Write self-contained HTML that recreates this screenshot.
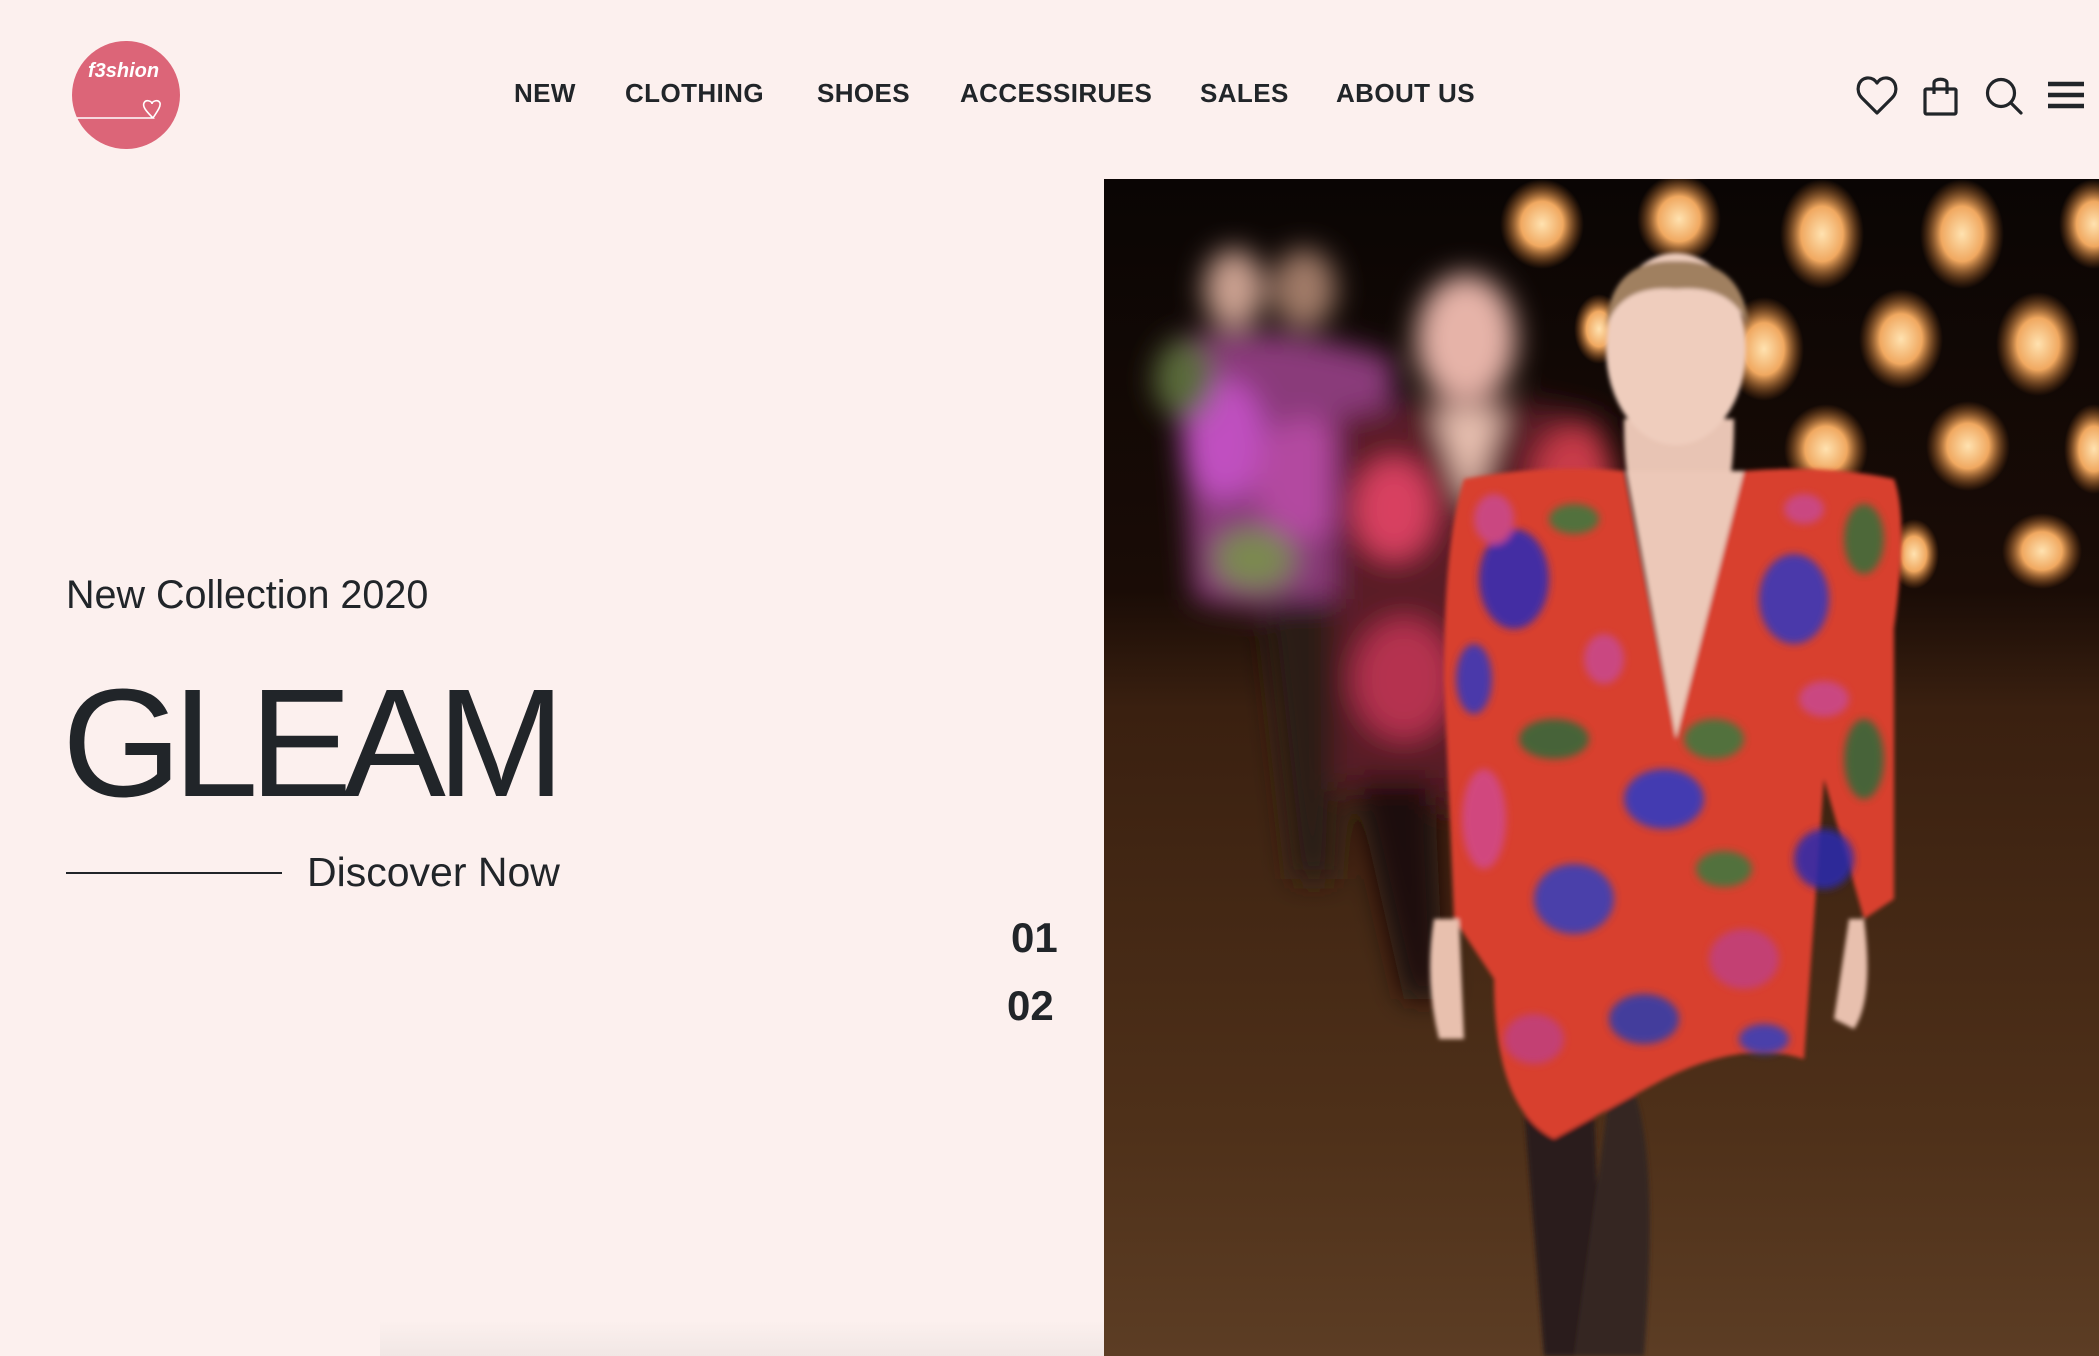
<!DOCTYPE html>
<html><head><meta charset="utf-8"><style>
*{margin:0;padding:0;box-sizing:border-box}
html,body{width:2099px;height:1356px;overflow:hidden;background:#fcf0ee;font-family:"Liberation Sans",sans-serif;color:#212529}
.abs{position:absolute}
nav a{position:absolute;top:78px;font-size:26px;font-weight:bold;color:#212529;text-decoration:none;letter-spacing:0.4px;white-space:nowrap}
</style></head><body>
<svg class="abs" style="left:72px;top:41px" width="108" height="108" viewBox="0 0 108 108">
<circle cx="54" cy="54" r="54" fill="#dc6578"/>
<text x="16" y="36" font-family="Liberation Sans" font-style="italic" font-weight="bold" font-size="20" fill="#fff">f3shion</text>
<path d="M5 77 H81 C76 72 70 66 72 62 C74 58 80 60 80 63 C80 60 86 58 88 62 C89 66 84 72 81 77" fill="none" stroke="#fff" stroke-width="1.6"/>
</svg>
<nav>
<a style="left:514px">NEW</a>
<a style="left:625px">CLOTHING</a>
<a style="left:817px">SHOES</a>
<a style="left:960px">ACCESSIRUES</a>
<a style="left:1200px">SALES</a>
<a style="left:1336px">ABOUT US</a>
</nav>
<svg class="abs" style="left:1855px;top:74px" width="240" height="44" viewBox="0 0 240 44" fill="none" stroke="#212529" stroke-width="3.2">
<path d="M22 39 L7 24 C0 17 3 5 12 4 C17 3.5 20 6 22 9 C24 6 27 3.5 32 4 C41 5 44 17 37 24 Z" stroke-linejoin="round"/>
<rect x="70" y="15" width="31" height="25" rx="1.5"/>
<path d="M79 20 V9 C79 4 92 4 92 9 V20"/>
<circle cx="146" cy="19" r="13.5"/>
<path d="M156 29 L166 39" stroke-linecap="round"/>
<path d="M193 10 H229 M193 21 H229 M193 32 H229" stroke-width="4.5"/>
</svg>
<div class="abs" style="left:66px;top:573px;font-size:39.5px;white-space:nowrap">New Collection 2020</div>
<div class="abs" style="left:62px;top:666px;font-size:154px;letter-spacing:-9px;line-height:1;white-space:nowrap">GLEAM</div>
<div class="abs" style="left:66px;top:872px;width:216px;height:2px;background:#212529"></div>
<div class="abs" style="left:307px;top:849px;font-size:41px;white-space:nowrap">Discover Now</div>
<div class="abs" style="left:1011px;top:914px;font-size:42px;font-weight:bold">01</div>
<div class="abs" style="left:1007px;top:982px;font-size:42px;font-weight:bold">02</div>
<div class="abs" style="left:380px;top:1320px;width:724px;height:36px;background:linear-gradient(#fcf0ee,#f1e7e5)"></div>
<svg class="abs" style="left:1104px;top:179px" width="995" height="1177" viewBox="0 0 995 1177">
<defs>
<linearGradient id="bg" x1="0" y1="0" x2="0" y2="1"><stop offset="0" stop-color="#0a0504"/><stop offset="0.35" stop-color="#1a0c06"/><stop offset="0.45" stop-color="#3a2010"/><stop offset="0.8" stop-color="#4e3019"/><stop offset="1" stop-color="#5c3d24"/></linearGradient>
<filter id="b1"><feGaussianBlur stdDeviation="14"/></filter>
<filter id="b2"><feGaussianBlur stdDeviation="4"/></filter>
<filter id="b3"><feGaussianBlur stdDeviation="2"/></filter>
<radialGradient id="bk"><stop offset="0" stop-color="#ffe2b0"/><stop offset="0.5" stop-color="#f0a860"/><stop offset="1" stop-color="#b06020" stop-opacity="0"/></radialGradient>
</defs>
<rect width="995" height="1177" fill="url(#bg)"/>
<g>
<ellipse cx="438" cy="45" rx="42" ry="45" fill="url(#bk)"/>
<ellipse cx="575" cy="40" rx="42" ry="45" fill="url(#bk)"/>
<ellipse cx="718" cy="55" rx="42" ry="55" fill="url(#bk)"/>
<ellipse cx="858" cy="55" rx="42" ry="55" fill="url(#bk)"/>
<ellipse cx="990" cy="45" rx="35" ry="45" fill="url(#bk)"/>
<ellipse cx="660" cy="170" rx="40" ry="52" fill="url(#bk)"/>
<ellipse cx="797" cy="160" rx="42" ry="50" fill="url(#bk)"/>
<ellipse cx="934" cy="165" rx="42" ry="52" fill="url(#bk)"/>
<ellipse cx="495" cy="150" rx="25" ry="35" fill="url(#bk)"/>
<ellipse cx="722" cy="270" rx="42" ry="45" fill="url(#bk)"/>
<ellipse cx="864" cy="267" rx="42" ry="45" fill="url(#bk)"/>
<ellipse cx="990" cy="270" rx="30" ry="45" fill="url(#bk)"/>
<ellipse cx="938" cy="372" rx="40" ry="38" fill="url(#bk)"/>
<ellipse cx="810" cy="375" rx="25" ry="35" fill="url(#bk)"/>
</g>
<g filter="url(#b1)">
<ellipse cx="130" cy="110" rx="30" ry="40" fill="#caa090"/>
<ellipse cx="200" cy="110" rx="32" ry="40" fill="#a07a68"/>
<path d="M70 160 Q170 140 290 180 L280 420 Q170 440 90 420 Z" fill="#8a3a7a"/>
<ellipse cx="120" cy="260" rx="40" ry="60" fill="#c050c0"/>
<ellipse cx="200" cy="300" rx="50" ry="60" fill="#b34aa0"/>
<ellipse cx="80" cy="200" rx="30" ry="40" fill="#5a6a3a"/>
<ellipse cx="150" cy="380" rx="40" ry="30" fill="#7a8a50"/>
<path d="M160 420 L190 700 L230 700 L240 420 Z" fill="#2a1a14"/>
<ellipse cx="362" cy="160" rx="50" ry="65" fill="#e6b3a8"/>
<path d="M230 240 Q370 200 500 240 L520 620 Q380 640 230 610 Z" fill="#5a1a28"/>
<ellipse cx="290" cy="330" rx="40" ry="50" fill="#d84060"/>
<ellipse cx="300" cy="500" rx="50" ry="60" fill="#b53050"/>
<ellipse cx="470" cy="300" rx="40" ry="50" fill="#c93a4a"/>
<ellipse cx="400" cy="420" rx="30" ry="30" fill="#e05070"/>
<path d="M330 230 L365 330 L400 230 Z" fill="#e8c0b0"/>
<path d="M250 600 L300 820 L340 820 L330 600 Z" fill="#1a0f0c"/>
</g>
<g filter="url(#b3)">
<path d="M520 240 Q520 300 530 320 L620 320 Q630 300 630 240 Z" fill="#e8c4b4"/>
<ellipse cx="572" cy="170" rx="70" ry="96" fill="#efcdbd"/>
<path d="M502 150 Q505 80 572 82 Q640 80 645 150 Q630 105 572 110 Q515 105 502 150Z" fill="#a08060"/>
<path d="M420 930 L440 1177 L500 1177 L490 930 Z" fill="#2a1e1c"/>
<path d="M510 880 Q560 920 540 1177 L470 1177 Z" fill="#352624"/>
<path d="M360 300 Q440 285 520 292 L572 560 L640 292 Q720 285 790 300 Q805 340 790 450 L790 720 L760 740 L720 600 L700 880 Q640 860 560 900 L450 960 Q390 930 390 800 L350 740 L340 500 Q340 360 360 300 Z" fill="#d8402e"/>
<path d="M522 292 L572 560 L640 292 Z" fill="#ecc8b8"/>
<path d="M330 740 Q320 800 335 860 L360 860 L355 740 Z" fill="#e8c0ae"/>
<path d="M760 740 Q770 820 750 850 L730 840 L745 740Z" fill="#e8c0ae"/>
</g>
<g filter="url(#b2)" opacity="0.85">
<ellipse cx="410" cy="400" rx="35" ry="50" fill="#2b2bb8"/>
<ellipse cx="560" cy="620" rx="40" ry="30" fill="#2a3ac8"/>
<ellipse cx="690" cy="420" rx="35" ry="45" fill="#3038c0"/>
<ellipse cx="720" cy="680" rx="30" ry="30" fill="#2a2ab0"/>
<ellipse cx="470" cy="720" rx="40" ry="35" fill="#3040c0"/>
<ellipse cx="380" cy="640" rx="22" ry="50" fill="#d04a8c"/>
<ellipse cx="640" cy="780" rx="35" ry="30" fill="#c04080"/>
<ellipse cx="450" cy="560" rx="35" ry="20" fill="#2f6a3a"/>
<ellipse cx="760" cy="360" rx="20" ry="35" fill="#35703a"/>
<ellipse cx="540" cy="840" rx="35" ry="25" fill="#2c3cb0"/>
<ellipse cx="390" cy="340" rx="20" ry="25" fill="#c84a90"/>
<ellipse cx="610" cy="560" rx="30" ry="20" fill="#3a7a40"/>
<ellipse cx="470" cy="340" rx="25" ry="15" fill="#3a7a40"/>
<ellipse cx="720" cy="520" rx="25" ry="18" fill="#c84a90"/>
<ellipse cx="370" cy="500" rx="18" ry="35" fill="#3038c0"/>
<ellipse cx="760" cy="580" rx="20" ry="40" fill="#2f6a3a"/>
<ellipse cx="620" cy="690" rx="28" ry="18" fill="#3a7a40"/>
<ellipse cx="430" cy="860" rx="30" ry="25" fill="#c04080"/>
<ellipse cx="660" cy="860" rx="25" ry="15" fill="#3040c0"/>
<ellipse cx="500" cy="480" rx="20" ry="25" fill="#c84a90"/>
<ellipse cx="700" cy="330" rx="20" ry="15" fill="#c84a90"/>
</g>
</svg>
</body></html>
